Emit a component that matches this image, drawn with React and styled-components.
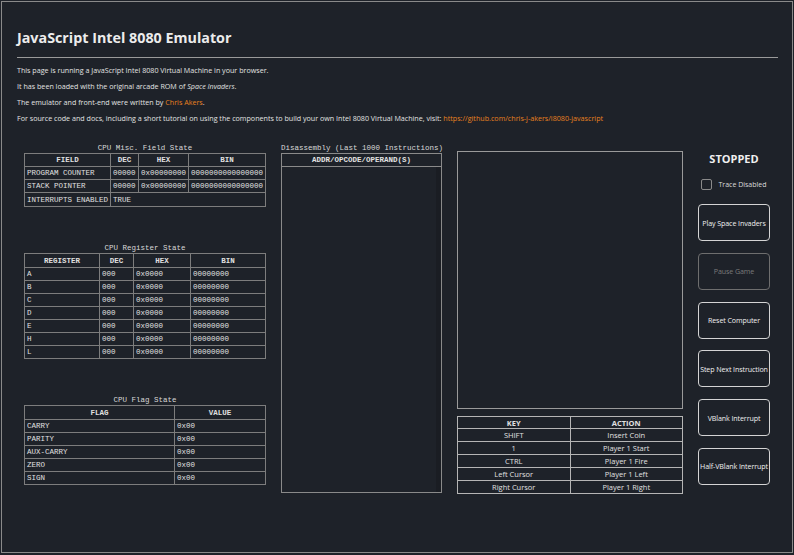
import React from "react";
import styled, { createGlobalStyle } from "styled-components";

const Global = createGlobalStyle`
  html, body { background: #1e2229; }
  body { margin: 1px; font-family: "Open Sans", "Noto Sans", sans-serif; color: #e2e2e2; }
  * { box-sizing: border-box; }
`;

const Frame = styled.div`
  height: 552px;
  border: 1px solid #8a8a8a;
  padding: 0 14px 0 15px;
  background: #1e2229;
`;

const Title = styled.h1`
  margin: 0;
  padding-top: 26px;
  font-size: 14.3px;
  line-height: 20px;
  font-weight: 700;
  color: #ececec;
`;

const Rule = styled.hr`
  margin: 9px 0 0 0;
  border: 0;
  height: 1px;
  background: #9a9a9a;
`;

const Intro = styled.div`
  margin-top: 4px;
  font-size: 7.15px;
  line-height: 16px;
`;

const Line = styled.p`
  margin: 0;
`;

const Link = styled.a`
  color: #e8811f;
  text-decoration: none;
`;

const Main = styled.div`
  display: flex;
  align-items: flex-start;
  margin-top: 17px;
`;

const LeftCol = styled.div`
  width: 242px;
  margin-left: 7px;
  display: flex;
  flex-direction: column;
`;

const Section = styled.div`
  margin-top: ${(p) => p.$top || 0}px;
`;

const Caption = styled.div`
  font-family: "Liberation Mono", monospace;
  font-size: 7.5px;
  line-height: 10px;
  text-align: center;
  color: #d8d8d8;
  white-space: nowrap;
`;

const Table = styled.table`
  width: 100%;
  border-collapse: collapse;
  table-layout: fixed;
  font-family: ${(p) => (p.$sans ? `"Open Sans", "Noto Sans", sans-serif` : `"Liberation Mono", monospace`)};
  font-size: 7.5px;
  color: #e0e0e0;
  border: 1px solid ${(p) => (p.$light ? "#b5b5b5" : "#8a8a8a")};
`;

const Th = styled.th`
  border: 1px solid ${(p) => (p.$light ? "#b5b5b5" : "#7d7d7d")};
  height: ${(p) => p.$h || 13}px;
  padding: 0 2px;
  font-weight: 700;
  text-align: center;
  white-space: nowrap;
  overflow: hidden;
`;

const Td = styled.td`
  border: 1px solid ${(p) => (p.$light ? "#b5b5b5" : "#7d7d7d")};
  height: ${(p) => p.$h || 13}px;
  padding: 0 2px;
  text-align: ${(p) => (p.$center ? "center" : "left")};
  white-space: nowrap;
  overflow: hidden;
`;

const DisCol = styled.div`
  width: 161px;
  margin-left: 15px;
`;

const DisBox = styled.div`
  height: 340px;
  border: 1px solid #8a8a8a;
  display: flex;
  flex-direction: column;
`;

const DisHead = styled.div`
  height: 13px;
  border-bottom: 1px solid #8a8a8a;
  font-family: "Liberation Mono", monospace;
  font-size: 7.5px;
  font-weight: 700;
  line-height: 12px;
  text-align: center;
`;

const DisBody = styled.div`
  flex: 1;
  display: flex;
  justify-content: flex-end;
`;

const Track = styled.div`
  width: 5px;
  background: #1a1d23;
`;

const ScreenCol = styled.div`
  width: 226px;
  margin-left: 15px;
  margin-top: 8px;
`;

const Screen = styled.div`
  height: 258px;
  border: 1px solid #9a9a9a;
  margin-bottom: 7px;
`;

const Controls = styled.div`
  width: 72px;
  margin-left: 15px;
  margin-top: 9px;
  display: flex;
  flex-direction: column;
  align-items: center;
`;

const Status = styled.div`
  font-size: 11px;
  font-weight: 700;
  line-height: 14px;
  color: #f0f0f0;
`;

const TraceRow = styled.label`
  display: flex;
  align-items: center;
  gap: 6px;
  margin-top: 13px;
  font-size: 7px;
  white-space: nowrap;
  color: #dcdcdc;
`;

const Box = styled.span`
  width: 11px;
  height: 11px;
  border: 1px solid #8a8a8a;
  border-radius: 2px;
`;

const Button = styled.button`
  width: 72px;
  height: 37px;
  margin-top: ${(p) => (p.$first ? 14 : 11.8)}px;
  padding: 0;
  background: transparent;
  border: 1px solid ${(p) => (p.disabled ? "#6e6e6e" : "#d4d4d4")};
  border-radius: 4px;
  color: ${(p) => (p.disabled ? "#7a7a7a" : "#f0f0f0")};
  font-family: "Open Sans", "Noto Sans", sans-serif;
  font-size: 7.1px;
  white-space: nowrap;
  letter-spacing: -0.1px;
`;

const misc = [
  ["PROGRAM COUNTER", "00000", "0x00000000", "0000000000000000"],
  ["STACK POINTER", "00000", "0x00000000", "0000000000000000"],
];
const regs = ["A", "B", "C", "D", "E", "H", "L"];
const flags = ["CARRY", "PARITY", "AUX-CARRY", "ZERO", "SIGN"];
const keys = [
  ["SHIFT", "Insert Coin"],
  ["1", "Player 1 Start"],
  ["CTRL", "Player 1 Fire"],
  ["Left Cursor", "Player 1 Left"],
  ["Right Cursor", "Player 1 Right"],
];
const buttons = [
  "Play Space Invaders",
  "Pause Game",
  "Reset Computer",
  "Step Next Instruction",
  "VBlank Interrupt",
  "Half-VBlank Interrupt",
];

export default function App() {
  return (
    <>
      <Global />
      <Frame>
        <Title>JavaScript Intel 8080 Emulator</Title>
        <Rule />
        <Intro>
          <Line>This page is running a JavaScript Intel 8080 Virtual Machine in your browser.</Line>
          <Line>
            It has been loaded with the original arcade ROM of <em>Space Invaders</em>.
          </Line>
          <Line>
            The emulator and front-end were written by <Link>Chris Akers</Link>.
          </Line>
          <Line>
            For source code and docs, including a short tutorial on using the components to build your own Intel 8080 Virtual Machine, visit:{" "}
            <Link>https://github.com/chris-j-akers/i8080-javascript</Link>
          </Line>
        </Intro>
        <Main>
          <LeftCol>
            <Section>
              <Caption>CPU Misc. Field State</Caption>
              <Table>
                <colgroup>
                  <col style={{ width: 86 }} />
                  <col style={{ width: 28 }} />
                  <col style={{ width: 50 }} />
                  <col />
                </colgroup>
                <thead>
                  <tr>
                    <Th>FIELD</Th>
                    <Th>DEC</Th>
                    <Th>HEX</Th>
                    <Th>BIN</Th>
                  </tr>
                </thead>
                <tbody>
                  {misc.map((r) => (
                    <tr key={r[0]}>
                      {r.map((c, i) => (
                        <Td key={i}>{c}</Td>
                      ))}
                    </tr>
                  ))}
                  <tr>
                    <Td $h={14}>INTERRUPTS ENABLED</Td>
                    <Td colSpan={3}>TRUE</Td>
                  </tr>
                </tbody>
              </Table>
            </Section>
            <Section $top={36}>
              <Caption>CPU Register State</Caption>
              <Table>
                <colgroup>
                  <col style={{ width: 75 }} />
                  <col style={{ width: 34 }} />
                  <col style={{ width: 57 }} />
                  <col />
                </colgroup>
                <thead>
                  <tr>
                    <Th $h={14}>REGISTER</Th>
                    <Th>DEC</Th>
                    <Th>HEX</Th>
                    <Th>BIN</Th>
                  </tr>
                </thead>
                <tbody>
                  {regs.map((r) => (
                    <tr key={r}>
                      <Td>{r}</Td>
                      <Td>000</Td>
                      <Td>0x0000</Td>
                      <Td>00000000</Td>
                    </tr>
                  ))}
                </tbody>
              </Table>
            </Section>
            <Section $top={36}>
              <Caption>CPU Flag State</Caption>
              <Table>
                <colgroup>
                  <col style={{ width: 150 }} />
                  <col />
                </colgroup>
                <thead>
                  <tr>
                    <Th $h={14}>FLAG</Th>
                    <Th>VALUE</Th>
                  </tr>
                </thead>
                <tbody>
                  {flags.map((f) => (
                    <tr key={f}>
                      <Td>{f}</Td>
                      <Td>0x00</Td>
                    </tr>
                  ))}
                </tbody>
              </Table>
            </Section>
          </LeftCol>
          <DisCol>
            <Caption>Disassembly (Last 1000 Instructions)</Caption>
            <DisBox>
              <DisHead>ADDR/OPCODE/OPERAND(S)</DisHead>
              <DisBody>
                <Track />
              </DisBody>
            </DisBox>
          </DisCol>
          <ScreenCol>
            <Screen />
            <Table $sans $light>
              <thead>
                <tr>
                  <Th $light $h={12}>KEY</Th>
                  <Th $light $h={12}>ACTION</Th>
                </tr>
              </thead>
              <tbody>
                {keys.map((k) => (
                  <tr key={k[0]}>
                    <Td $light $center $h={13}>{k[0]}</Td>
                    <Td $light $center $h={13}>{k[1]}</Td>
                  </tr>
                ))}
              </tbody>
            </Table>
          </ScreenCol>
          <Controls>
            <Status>STOPPED</Status>
            <TraceRow>
              <Box />
              Trace Disabled
            </TraceRow>
            {buttons.map((b, i) => (
              <Button key={b} $first={i === 0} disabled={b === "Pause Game"}>
                {b}
              </Button>
            ))}
          </Controls>
        </Main>
      </Frame>
    </>
  );
}
